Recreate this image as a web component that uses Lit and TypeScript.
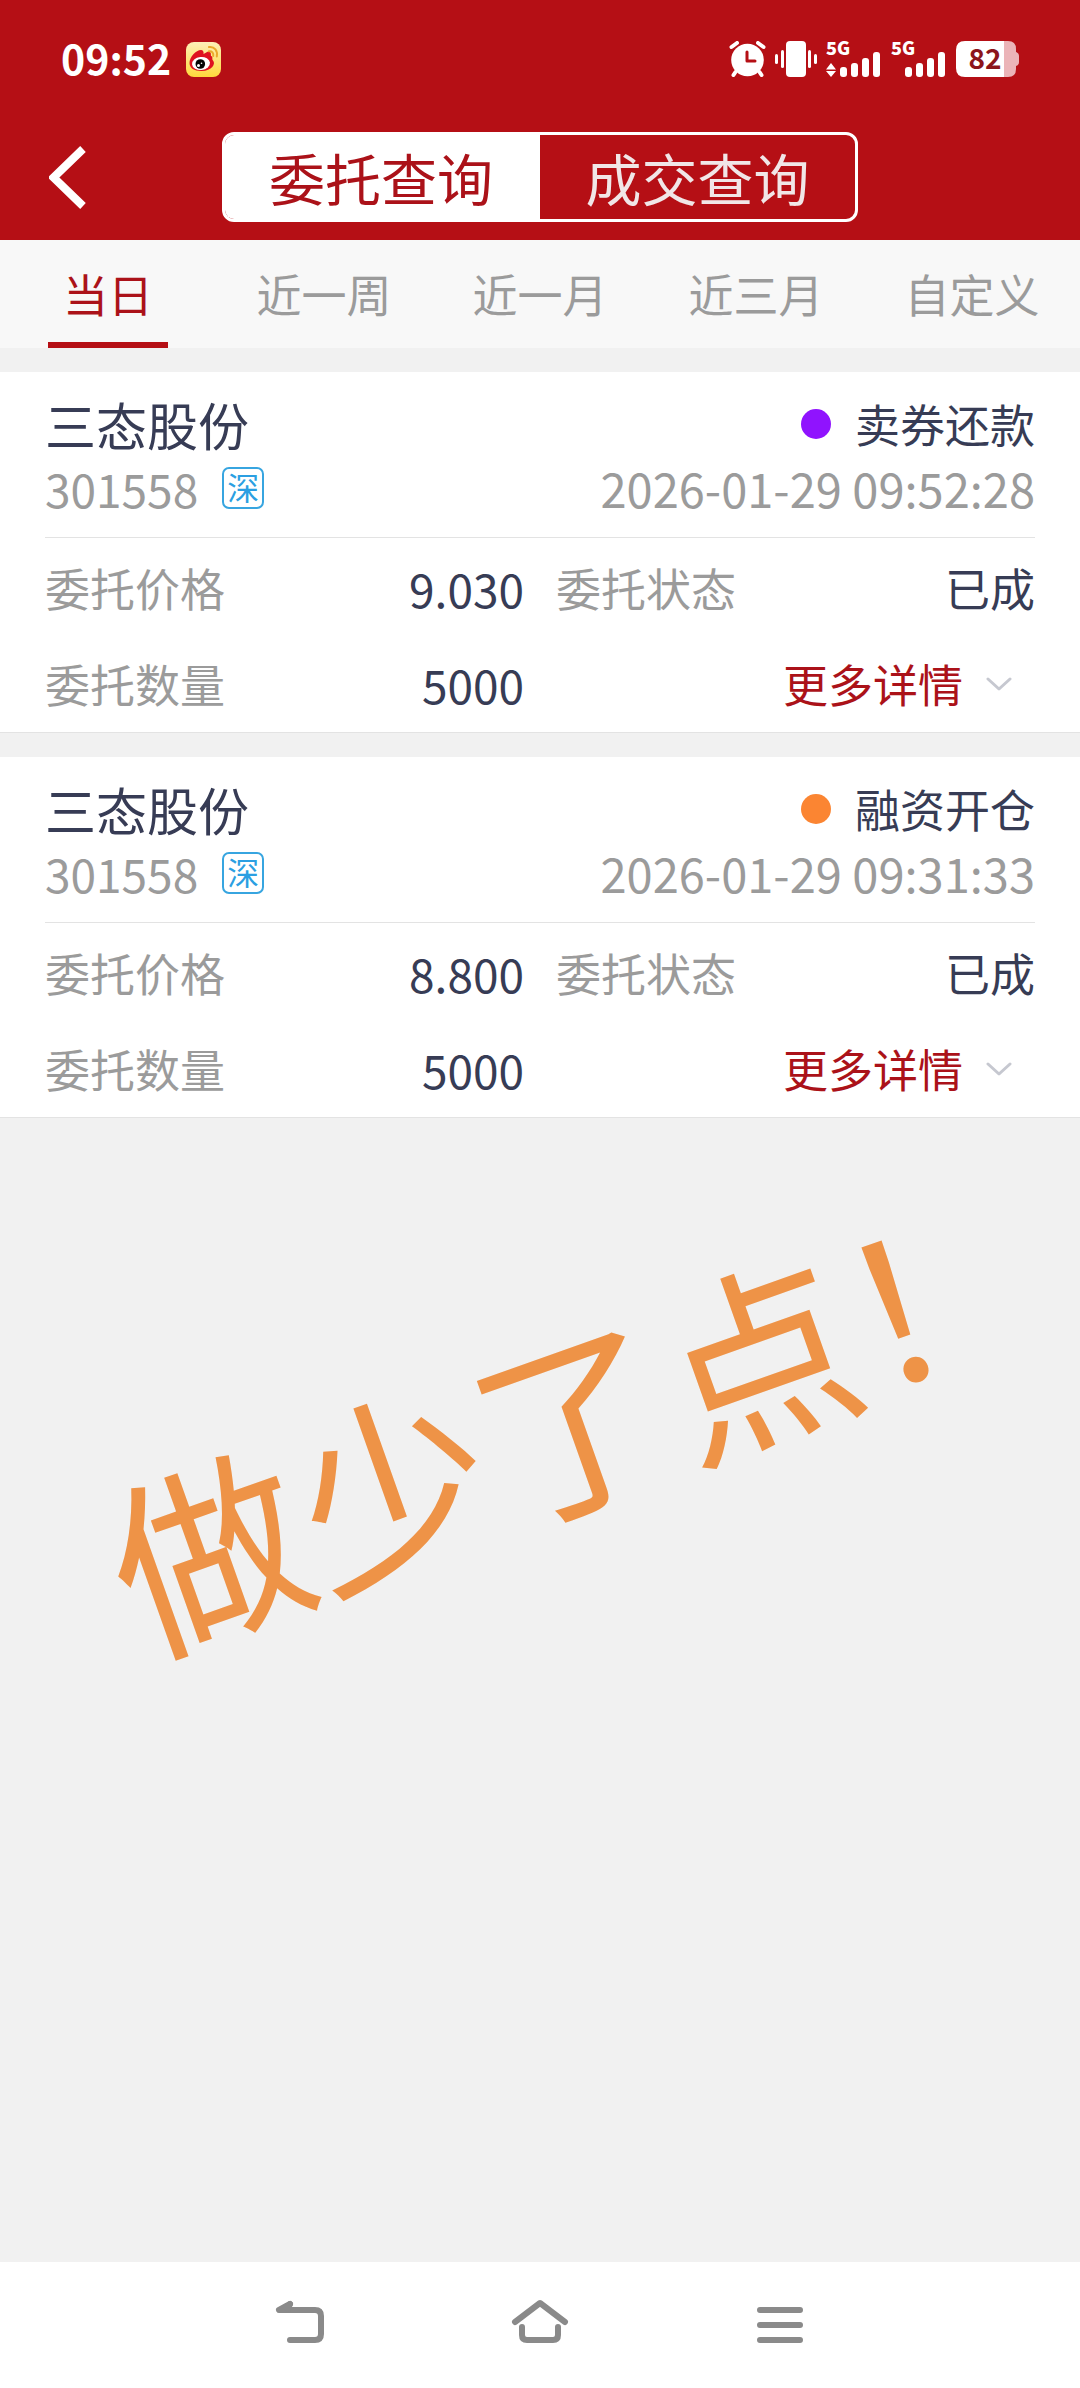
import { LitElement, html, css, svg } from "lit";
import { customElement, property, state } from "lit/decorators.js";
import { classMap } from "lit/directives/class-map.js";

interface Order {
  name: string;
  code: string;
  market: string;
  kind: string;
  tone: "violet" | "orange";
  time: string;
  price: string;
  amount: string;
  status: string;
}

const ORDERS: Order[] = [
  {
    name: "三态股份",
    code: "301558",
    market: "深",
    kind: "卖券还款",
    tone: "violet",
    time: "2026-01-29 09:52:28",
    price: "9.030",
    amount: "5000",
    status: "已成",
  },
  {
    name: "三态股份",
    code: "301558",
    market: "深",
    kind: "融资开仓",
    tone: "orange",
    time: "2026-01-29 09:31:33",
    price: "8.800",
    amount: "5000",
    status: "已成",
  },
];

@customElement("status-bar")
class StatusBar extends LitElement {
  static styles = css`
    :host {
      display: flex;
      align-items: center;
      justify-content: space-between;
      height: 118px;
      padding: 0 61px 0 61px;
      color: #fff;
    }
    .side {
      display: flex;
      align-items: center;
    }
    .time {
      padding-bottom: 4px;
      font-size: 41px;
      line-height: 60px;
      font-weight: 700;
      margin-right: 15px;
    }
    .icons {
      gap: 9px;
    }
    svg {
      display: block;
    }
    .net {
      font-size: 18px;
      font-weight: 900;
      fill: #fff;
    }
    .level {
      font-size: 28px;
      font-weight: 700;
      fill: #8c151b;
    }
  `;

  private signal(arrows: boolean) {
    return html`<svg width="56" height="56" viewBox="0 -10 56 56" aria-hidden="true">
      <text class="net" x="0" y="14">5G</text>
      ${arrows
        ? svg`<path d="M5 22L10 28.500H0ZM5 36L0 30H10Z" fill="#fff" />`
        : svg``}
      <g fill="#fff">
        <rect x="14" y="26" width="7" height="10" rx="3" />
        <rect x="25" y="22" width="7" height="14" rx="3" />
        <rect x="36" y="17" width="7" height="19" rx="3" />
        <rect x="47" y="11" width="7" height="25" rx="3" />
      </g>
    </svg>`;
  }

  render() {
    return html`
      <div class="side">
        <span class="time">09:52</span>
        <svg width="35" height="35" viewBox="0 0 35 35" aria-hidden="true">
          <defs>
            <linearGradient id="tile" x1="0" y1="0" x2="0" y2="1">
              <stop offset="0" stop-color="#fdf0b8" />
              <stop offset="1" stop-color="#ffd93c" />
            </linearGradient>
          </defs>
          <rect width="35" height="35" rx="8" fill="url(#tile)" />
          <path
            d="M3.500 21C3.500 15 10 8 15 8C17 8 18 10 17.500 12C20 11 22 8.500 24 10C25.500 11 24.500 13 25 14C27.500 14.500 25.500 17 27 18.500C30 22 26 29 15.500 29C8 29 3.500 26 3.500 21Z"
            fill="#df1220"
          />
          <ellipse cx="15" cy="21.500" rx="9" ry="6.500" fill="#fff" transform="rotate(-6 15 21.500)" />
          <circle cx="14.300" cy="22" r="4.800" fill="#050505" />
          <circle cx="12.500" cy="23.500" r="1.500" fill="#fff" />
          <circle cx="15.500" cy="21.300" r="0.800" fill="#fff" />
          <path
            d="M23 5C28.500 4.200 32 9 30.800 14.500M23 9.300C26 9 27.800 11 27.200 14"
            fill="none"
            stroke="#eba92c"
            stroke-width="2"
            stroke-linecap="round"
          />
        </svg>
      </div>
      <div class="side icons">
        <svg width="37" height="36" viewBox="0 0 37 36" aria-hidden="true">
          <g stroke="#fff" stroke-width="4" stroke-linecap="round">
            <path d="M2.500 6L8 2M34.500 6L29 2" />
            <path d="M6.500 31L4.500 34M30.500 31L32.500 34" />
          </g>
          <circle cx="18.500" cy="19" r="16.300" fill="#fff" />
          <path d="M18 11V20H26" fill="none" stroke="#b50f15" stroke-width="3" stroke-linecap="round" stroke-linejoin="round" />
        </svg>
        <svg width="42" height="36" viewBox="0 0 42 36" fill="#fff" aria-hidden="true">
          <rect x="0" y="13" width="3" height="10" rx="1.500" />
          <rect x="6" y="9" width="3" height="18" rx="1.500" />
          <rect x="11" y="0" width="20" height="36" rx="4" />
          <rect x="33" y="9" width="3" height="18" rx="1.500" />
          <rect x="39" y="13" width="3" height="10" rx="1.500" />
        </svg>
        ${this.signal(true)} ${this.signal(false)}
        <svg width="63" height="56" viewBox="0 -10 63 56">
          <path d="M48 0H52Q60 0 60 8V11Q63 12 63 15V21Q63 24 60 25V28Q60 36 52 36H48Z" fill="#ebb4b8" />
          <path d="M9 0H48V36H9Q0 36 0 27V9Q0 0 9 0Z" fill="#fff" />
          <text class="level" x="29" y="28" text-anchor="middle">82</text>
        </svg>
      </div>
    `;
  }
}

@customElement("order-card")
class OrderCard extends LitElement {
  @property({ attribute: false }) order!: Order;

  static styles = css`
    :host {
      display: block;
      background: #fff;
      border-bottom: 1px solid #e3e3e3;
      color: #373c55;
      font-size: 45px;
      line-height: 60px;
    }
    .head {
      margin: 0 45px;
      padding: 22px 0 15px;
      border-bottom: 1px solid #e3e3e3;
    }
    .line {
      display: flex;
      align-items: center;
      justify-content: space-between;
      height: 60px;
    }
    .sub {
      height: 68px;
      color: #9b9b9b;
    }
    .name {
      margin: 0;
      font-size: 51px;
      font-weight: 400;
    }
    .kind {
      display: flex;
      align-items: center;
      gap: 24px;
    }
    .dot {
      width: 30px;
      height: 30px;
      border-radius: 50%;
    }
    .violet {
      background: #9013fe;
    }
    .orange {
      background: #fb8532;
    }
    .stock {
      display: flex;
      align-items: center;
      gap: 24px;
      font-size: 46px;
    }
    .market {
      box-sizing: border-box;
      width: 42px;
      height: 42px;
      border: 2px solid #37a5e0;
      border-radius: 7px;
      color: #2b9fe2;
      font-size: 32px;
      line-height: 34px;
      text-align: center;
    }
    .number {
      font-size: 47px;
    }
    .facts {
      display: grid;
      grid-template-columns: 1fr 1fr;
      column-gap: 32px;
      margin: 0;
      padding: 2px 45px 0;
    }
    .fact {
      display: flex;
      align-items: center;
      justify-content: space-between;
      height: 96px;
    }
    .fact .number {
      font-size: 46px;
    }
    dt {
      color: #9b9b9b;
    }
    dd {
      margin: 0;
    }
    .more {
      display: flex;
      align-items: center;
      gap: 23px;
      margin-left: auto;
      padding: 0 23px 0 0;
      border: 0;
      background: none;
      color: #ab1219;
      font: inherit;
    }
  `;

  render() {
    const o = this.order;
    return html`
      <div class="head">
        <div class="line">
          <h2 class="name">${o.name}</h2>
          <span class="kind"><i class="dot ${o.tone}"></i>${o.kind}</span>
        </div>
        <div class="line sub">
          <span class="stock">${o.code}<span class="market">${o.market}</span></span>
          <time class="number">${o.time}</time>
        </div>
      </div>
      <dl class="facts">
        <div class="fact"><dt>委托价格</dt><dd class="number">${o.price}</dd></div>
        <div class="fact"><dt>委托状态</dt><dd>${o.status}</dd></div>
        <div class="fact"><dt>委托数量</dt><dd class="number">${o.amount}</dd></div>
        <div class="fact">
          <button class="more" type="button">
            更多详情
            <svg width="26" height="14" viewBox="0 0 26 14" aria-hidden="true">
              <path d="M2 2L13 12L24 2" fill="none" stroke="#c6c8d0" stroke-width="3" stroke-linecap="round" stroke-linejoin="round" />
            </svg>
          </button>
        </div>
      </dl>
    `;
  }
}

@customElement("app-root")
class AppRoot extends LitElement {
  @state() private mode = 0;
  @state() private range = 0;

  static styles = css`
    :host {
      display: flex;
      flex-direction: column;
      min-height: 100vh;
      background: #f1f1f1;
      font-family: "Noto Sans CJK SC", sans-serif;
      font-size: 45px;
    }
    button {
      border: 0;
      padding: 0;
      background: none;
      color: inherit;
      font: inherit;
    }
    svg {
      display: block;
    }
    .top {
      padding-bottom: 4px;
      background: #b50f15;
    }
    .toolbar {
      display: grid;
      grid-template-columns: 1fr 636px 1fr;
      align-items: center;
      height: 118px;
    }
    .back {
      justify-self: start;
      padding-left: 49px;
    }
    .switch {
      display: grid;
      grid-template-columns: 1fr 1fr;
      box-sizing: border-box;
      height: 90px;
      overflow: hidden;
      border: 3px solid #fff;
      border-radius: 12px;
      color: #f1e6e7;
      font-size: 56px;
      line-height: 84px;
    }
    .switch .on {
      border-right: 3px solid #fff;
      background: #fff;
      color: #ab1219;
    }
    .tabs {
      display: grid;
      grid-template-columns: repeat(5, 1fr);
      background: #f8f8f8;
      color: #9b9b9b;
    }
    .tab {
      display: flex;
      justify-content: center;
    }
    .tab span {
      min-width: 120px;
      padding-top: 6px;
      line-height: 96px;
      border-bottom: 6px solid transparent;
    }
    .tab.on span {
      border-color: #b50f15;
      color: #ab1219;
    }
    .list {
      display: flex;
      flex-direction: column;
      gap: 24px;
      padding-top: 24px;
    }
    .rest {
      position: relative;
      flex: 1;
    }
    .note {
      position: absolute;
      top: 200px;
      left: 87px;
      margin: 0;
      color: #ee9347;
      font-size: 194px;
      line-height: 194px;
      white-space: nowrap;
      transform: rotate(-19.5deg);
    }
    .keys {
      display: grid;
      grid-template-columns: repeat(3, 1fr);
      height: 126px;
      padding: 0 180px;
      background: #fff;
    }
    .key {
      display: grid;
      place-items: center;
    }
  `;

  render() {
    return html`
      <header class="top">
        <status-bar></status-bar>
        <div class="toolbar">
          <button class="back" type="button" aria-label="返回">
            <svg width="38" height="64" viewBox="0 0 38 64" aria-hidden="true">
              <path d="M34 4L4.500 32.500L34 61" fill="none" stroke="#fff" stroke-width="8" />
            </svg>
          </button>
          <div class="switch">
            ${["委托查询", "成交查询"].map(
              (t, i) => html`<button
                type="button"
                class=${classMap({ on: i === this.mode })}
                @click=${() => (this.mode = i)}
              >${t}</button>`
            )}
          </div>
        </div>
      </header>
      <nav class="tabs">
        ${["当日", "近一周", "近一月", "近三月", "自定义"].map(
          (t, i) => html`<button
            type="button"
            class=${classMap({ tab: true, on: i === this.range })}
            @click=${() => (this.range = i)}
          ><span>${t}</span></button>`
        )}
      </nav>
      <main class="list">
        ${ORDERS.map((o) => html`<order-card .order=${o}></order-card>`)}
      </main>
      <section class="rest"><p class="note">做少了点！</p></section>
      <footer class="keys">
        <button class="key" type="button" aria-label="后退">
          <svg width="64" height="64" viewBox="0 0 64 64" fill="none" stroke="#8a8a8a" stroke-width="6" stroke-linecap="round" stroke-linejoin="round" aria-hidden="true">
            <path d="M22 11L11 17H47Q53 17 53 23V41Q53 47 47 47H22" />
            <path d="M22 11L20 16" />
          </svg>
        </button>
        <button class="key" type="button" aria-label="主页">
          <svg width="64" height="64" viewBox="0 0 64 64" fill="none" stroke="#8a8a8a" stroke-width="6" stroke-linecap="round" stroke-linejoin="round" aria-hidden="true">
            <path d="M7 29L32 10L57 29" />
            <path d="M14 34V42Q14 47 19 47H45Q50 47 50 42V34" />
          </svg>
        </button>
        <button class="key" type="button" aria-label="最近任务">
          <svg width="64" height="64" viewBox="0 0 64 64" fill="none" stroke="#8a8a8a" stroke-width="6" stroke-linecap="round" aria-hidden="true">
            <path d="M12 17H52M12 32H52M12 47H52" />
          </svg>
        </button>
      </footer>
    `;
  }
}
